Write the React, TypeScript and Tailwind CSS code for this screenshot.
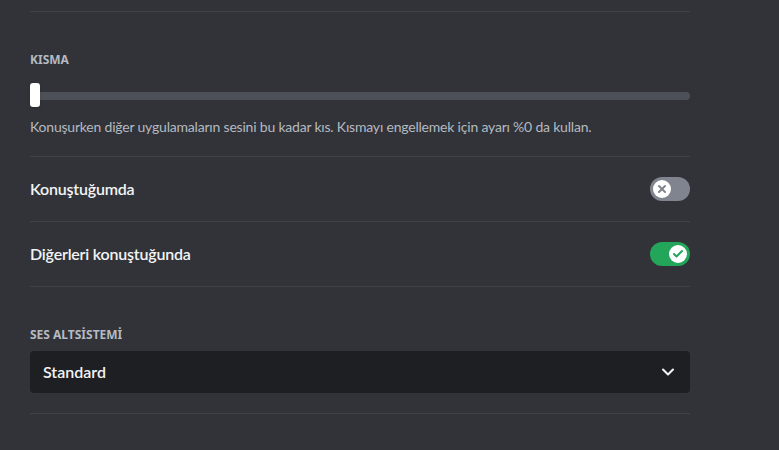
import { Check, X, ChevronDown } from "lucide-react"

function Toggle({ on }: { on: boolean }) {
  return (
    <div
      className={`flex h-6 w-10 shrink-0 items-center rounded-full px-[3px] ${
        on ? "justify-end bg-[#23a55a]" : "justify-start bg-[#80848e]"
      }`}
    >
      <div className="flex h-[18px] w-[18px] items-center justify-center rounded-full bg-white">
        {on ? (
          <Check className="h-3 w-3 text-[#23a55a]" strokeWidth={4} />
        ) : (
          <X className="h-3 w-3 text-[#80848e]" strokeWidth={4} />
        )}
      </div>
    </div>
  )
}

function ToggleRow({ label, on }: { label: string; on: boolean }) {
  return (
    <div className="flex items-center justify-between border-b border-[#3f4147] py-5">
      <span className="font-['Lato',sans-serif] text-base font-semibold leading-6 tracking-[-0.2px] text-[#f2f3f5]">
        {label}
      </span>
      <Toggle on={on} />
    </div>
  )
}

export default function App() {
  return (
    <div className="min-h-[450px] w-full bg-[#313338] px-[30px] font-['Noto_Sans',sans-serif]">
      <div className="w-[660px]">
        <div className="pt-[11px]">
          <div className="border-t border-[#3f4147]" />
        </div>

        {/* Kısma slider */}
        <div className="pt-10">
          <h5 className="text-xs font-bold uppercase leading-4 text-[#b5bac1]">Kısma</h5>
          <div className="relative mt-[15px] h-6">
            <div className="absolute left-0 right-0 top-[9px] h-2 rounded-full bg-[#4e5058]" />
            <div className="absolute left-0 top-0 h-6 w-[10px] rounded-[3px] bg-white shadow" />
          </div>
          <p className="mt-[10px] font-['Lato',sans-serif] text-sm leading-5 tracking-[-0.2px] text-[#b5bac1]">
            Konuşurken diğer uygulamaların sesini bu kadar kıs. Kısmayı engellemek için ayarı %0 da kullan.
          </p>
        </div>

        <div className="mt-[19px] border-b border-[#3f4147]" />

        <ToggleRow label="Konuştuğumda" on={false} />
        <ToggleRow label="Diğerleri konuştuğunda" on={true} />

        {/* Ses altsistemi */}
        <div className="border-b border-[#3f4147] pb-5 pt-10">
          <h5 className="text-xs font-bold uppercase leading-4 text-[#b5bac1]">Ses altsİstemİ</h5>
          <div className="mt-2 flex h-[42px] items-center justify-between rounded bg-[#1e1f22] pl-[13px] pr-3">
            <span className="font-['Lato',sans-serif] text-base font-semibold text-[#f2f3f5]">Standard</span>
            <ChevronDown className="h-5 w-5 text-[#f2f3f5]" strokeWidth={2.5} />
          </div>
        </div>
      </div>
    </div>
  )
}
